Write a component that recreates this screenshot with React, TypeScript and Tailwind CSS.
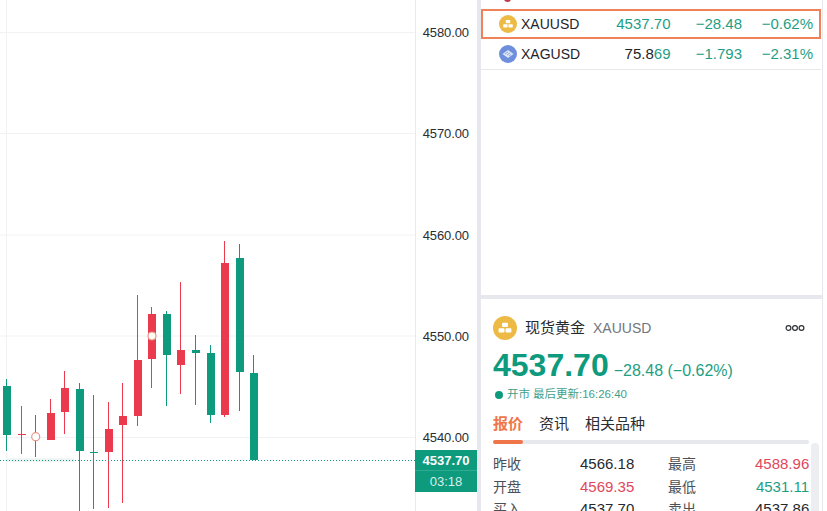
const SANS = "font-['Liberation_Sans','Noto_Sans_CJK_SC',sans-serif]";
const GREEN = '#0E9A7D';
const RED = '#EB3A4D';

type C = [number, number, number, number, number, 'r' | 'g'];
const candles: C[] = [
  [6.5, 379, 451, 386, 435, 'g'],
  [21.5, 406, 454, 434, 435, 'r'],
  [35.5, 415, 457, 436, 437, 'g'],
  [50.5, 399, 440, 413, 440, 'r'],
  [64.5, 371, 434, 388, 412, 'r'],
  [79.5, 383, 520, 389, 451, 'g'],
  [93.5, 395, 509, 452, 453, 'g'],
  [108.5, 402, 508, 429, 452, 'r'],
  [122.5, 383, 503, 416, 425, 'r'],
  [137.5, 295, 426, 360, 416, 'r'],
  [151.5, 307, 388, 314, 359, 'r'],
  [166.5, 311, 406, 314, 355, 'g'],
  [180.5, 282, 394, 350, 365, 'r'],
  [195.5, 335, 405, 350, 353, 'g'],
  [210.5, 345, 423, 353, 415, 'g'],
  [224.5, 241, 417, 263, 415, 'r'],
  [239.5, 244, 411, 258, 372, 'g'],
  [253.5, 355, 460, 373, 460, 'g'],
];
const grid = [32.5, 133.5, 235, 336, 437.5];

function Chart() {
  return (
    <svg width="415" height="511" className="block shrink-0">
      {grid.map((y) => (
        <line key={y} x1="0" x2="415" y1={y} y2={y} stroke="#F1F2F4" />
      ))}
      <line x1="6.5" x2="6.5" y1="0" y2="511" stroke="#F1F2F4" />
      <rect x="6" y="458" width="68" height="4" fill="#EEF5F3" />
      {candles.map(([x, t, b, bt, bb, c]) => {
        const col = c === 'r' ? RED : GREEN;
        return (
          <g key={x}>
            <line x1={x} x2={x} y1={t} y2={b} stroke={col} strokeWidth="1" />
            <rect x={x - 3.5} y={bt} width="8" height={Math.max(bb - bt, 1)} fill={col} />
          </g>
        );
      })}
      <line x1="0" x2="415" y1="460.5" y2="460.5" stroke={GREEN} strokeDasharray="1 2" />
      <circle cx="35.7" cy="436.7" r="4" fill="#fff" stroke="#E59A86" strokeWidth="1.2" />
      <circle cx="152" cy="336" r="4" fill="#FFFBF2" stroke="#E59A86" strokeWidth="1.2" />
    </svg>
  );
}

function PriceAxis() {
  return (
    <div className={`relative w-[62px] h-[511px] shrink-0 border-l border-[#E8EAED] text-[13px] text-[#2a2e33] ${SANS}`}>
      <div className="flex flex-col items-end pr-[8px] pt-[24px]">
        {['4580.00', '4570.00', '4560.00', '4550.00', '4540.00'].map((p) => (
          <div key={p} className="h-[101.25px] leading-[17px] tracking-[-0.1px]">{p}</div>
        ))}
      </div>
      <div className="absolute left-[-1px] top-[450px] w-[62px] h-[42px] bg-[#0E9A7D] text-white flex flex-col items-center">
        <div className="h-[21px] leading-[21px] font-bold text-[13px] border-b border-[#2fab91] w-full text-center">4537.70</div>
        <div className="leading-[21px] text-[13px] text-[#d5efe9]">03:18</div>
      </div>
    </div>
  );
}

function Coin({ kind, size }: { kind: 'gold' | 'silver'; size: number }) {
  if (kind === 'gold') {
    return (
      <svg width={size} height={size} viewBox="0 0 18 18" className="shrink-0">
        <circle cx="9" cy="9" r="9" fill="#EDBB45" />
        <rect x="6.8" y="5" width="4.4" height="3.2" rx="0.6" fill="#fff" />
        <rect x="4.2" y="9.2" width="4.4" height="3.2" rx="0.6" fill="#fff" />
        <rect x="9.4" y="9.2" width="4.4" height="3.2" rx="0.6" fill="#fff" />
      </svg>
    );
  }
  return (
    <svg width={size} height={size} viewBox="0 0 18 18" className="shrink-0">
      <circle cx="9" cy="9" r="9" fill="#6E90DC" />
      <path d="M3.5 9 L9 5 L14.5 9 L9 13 Z" fill="#DCE6F8" />
      <path d="M6 9 L9 7 M8 10 L11 8 M10 11 L12 9.5" stroke="#6E90DC" strokeWidth="0.7" />
    </svg>
  );
}

function Row({ kind, sym, price, priceGreen, ch, pct, active }: { kind: 'gold' | 'silver'; sym: string; price: string; priceGreen: string; ch: string; pct: string; active?: boolean }) {
  return (
    <div className={`flex items-center ${active ? 'border-2 border-[#F0825A] h-[30px] pl-[16px]' : 'border-b border-[#E6E8EC] h-[31px] pl-[18px]'}`}>
      <Coin kind={kind} size={18} />
      <span className="ml-[4px] w-[70px] text-[14px] text-[#1f2328]">{sym}</span>
      <span className="w-[79.5px] text-right text-[15px] text-[#1f2328] whitespace-nowrap">{price}<span className="text-[#1E9E84]">{priceGreen}</span></span>
      <span className="w-[71.5px] text-right text-[15px] text-[#1E9E84]">{ch}</span>
      <span className="w-[71px] text-right text-[15px] text-[#1E9E84]">{pct}</span>
    </div>
  );
}

function Stat({ a, b, bc, c, d, dc }: { a: string; b: string; bc: string; c: string; d: string; dc: string }) {
  return (
    <div className="flex h-[22.5px] items-center leading-[22px] whitespace-nowrap">
      <span className="w-[87px] text-[14px] text-[#4b5057]">{a}</span>
      <span className={`w-[54px] text-right text-[15px] ${bc}`}>{b}</span>
      <span className="ml-[34px] w-[87px] text-[14px] text-[#4b5057]">{c}</span>
      <span className={`w-[54px] text-right text-[15px] ${dc}`}>{d}</span>
    </div>
  );
}

export default function App() {
  return (
    <div className={`flex w-[827px] h-[511px] overflow-hidden bg-white ${SANS}`}>
      <Chart />
      <PriceAxis />
      <div className="w-[346px] h-[511px] shrink-0 flex flex-col bg-[#E6E8EE] pl-[4px] pr-[1px]">
        <div className="relative h-[295px] bg-white pt-[9px] pr-[1px] shrink-0 overflow-hidden">
          <div className="absolute left-[23px] top-[-5px] w-[7px] h-[7px] rounded-full bg-[#C0394A]" />
          <Row kind="gold" sym="XAUUSD" price="" priceGreen="4537.70" ch="−28.48" pct="−0.62%" active />
          <Row kind="silver" sym="XAGUSD" price="75.8" priceGreen="69" ch="−1.793" pct="−2.31%" />
        </div>
        <div className="flex-1 mt-[4px] bg-white pl-[12px] pt-[17px] overflow-hidden">
          <div className="flex items-center h-[24px]">
            <Coin kind="gold" size={24} />
            <span className="ml-[8px] text-[15px] text-[#26292e]">现货黄金</span>
            <span className="ml-[8px] text-[14px] text-[#72767d]">XAUUSD</span>
            <svg width="20" height="8" viewBox="0 0 20 8" className="ml-[134px]">
              <circle cx="3.5" cy="4" r="2.4" fill="none" stroke="#2f3338" strokeWidth="1.2" />
              <circle cx="10" cy="4" r="2.4" fill="none" stroke="#2f3338" strokeWidth="1.2" />
              <circle cx="16.5" cy="4" r="2.4" fill="none" stroke="#2f3338" strokeWidth="1.2" />
            </svg>
          </div>
          <div className="flex items-baseline mt-[9px] h-[32px] text-[#0E9A7D] whitespace-nowrap">
            <span className="text-[32px] font-bold leading-[32px]">4537.70</span>
            <span className="ml-[5px] text-[16px] text-[#1E9E84]">−28.48 (−0.62%)</span>
          </div>
          <div className="flex items-center mt-[7px] h-[14px] text-[11.5px] text-[#3f9f8a]">
            <span className="w-[8px] h-[8px] rounded-full bg-[#0E9A7D] mr-[4px] ml-[2px] shrink-0" />
            <span>开市</span>
            <span className="ml-[3px]">最后更新:16:26:40</span>
          </div>
          <div className="flex gap-[16px] mt-[10px] text-[15px] h-[24px] leading-[24px] text-[#2a2d33]">
            <span className="font-bold text-[#F0764A]">报价</span>
            <span>资讯</span>
            <span>相关品种</span>
          </div>
          <div className="h-[4px] rounded-full bg-[#E6E8EE] w-[316px] mt-[4px]">
            <div className="h-[4px] w-[30px] rounded-full bg-[#F0764A]" />
          </div>
          <div className="flex mt-[9px]">
            <div className="w-[318px]">
              <Stat a="昨收" b="4566.18" bc="text-[#26292e]" c="最高" d="4588.96" dc="text-[#E0485C]" />
              <Stat a="开盘" b="4569.35" bc="text-[#E0485C]" c="最低" d="4531.11" dc="text-[#1E9E84]" />
              <Stat a="买入" b="4537.70" bc="text-[#26292e]" c="卖出" d="4537.86" dc="text-[#26292e]" />
            </div>
            <div className="w-[8px] h-[80px] -mt-[10px] rounded-t-full bg-[#EDEEF1]" />
          </div>
        </div>
      </div>
    </div>
  );
}
